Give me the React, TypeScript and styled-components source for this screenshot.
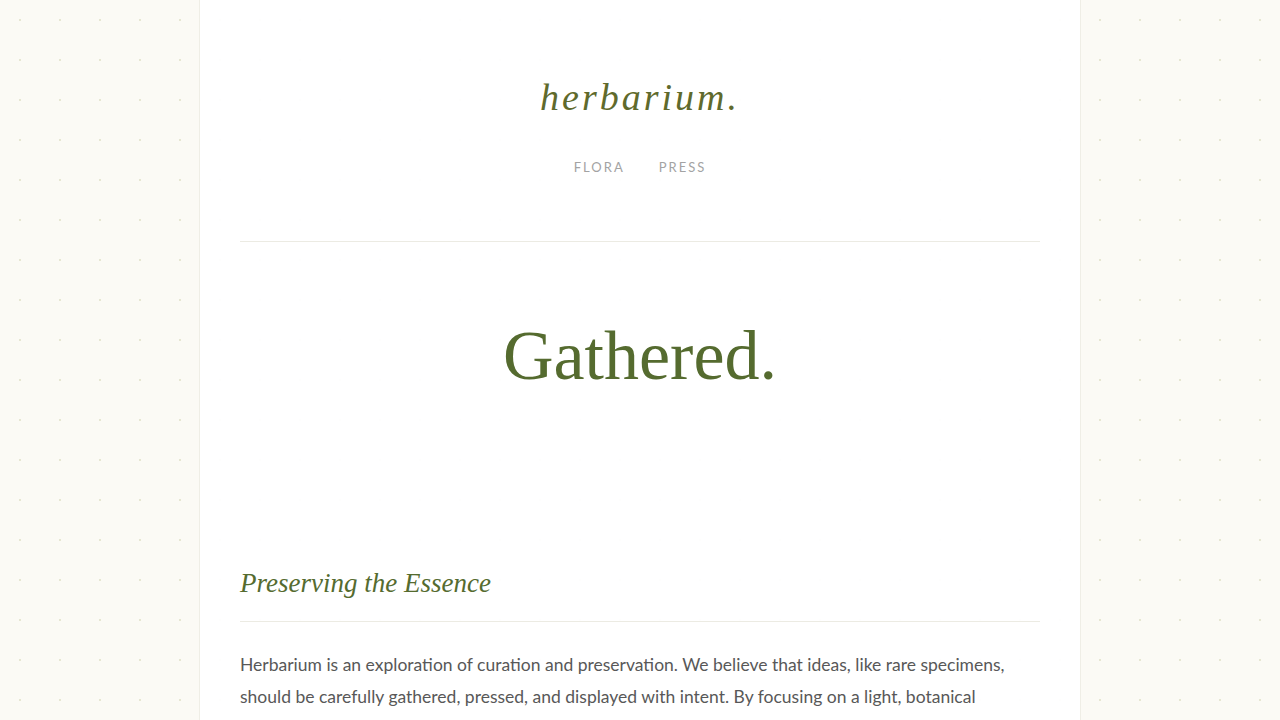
import React from 'react'
import styled, { createGlobalStyle } from 'styled-components'

const GlobalStyle = createGlobalStyle`
	html, body {
		margin: 0;
		padding: 0;
	}
	body {
		background-color: #fbfaf5;
		background-image: radial-gradient(circle at 20px 20px, #e6e6d2 1px, transparent 1.2px);
		background-size: 40px 40px;
		font-family: "Lato", "Liberation Sans", sans-serif;
		color: #555;
	}
`

const Page = styled.div`
	width: 800px;
	min-height: 100vh;
	margin: 0 auto;
	padding: 0 40px;
	background: rgba(255, 255, 255, 0.94);
	border-left: 1px solid #efeee6;
	border-right: 1px solid #efeee6;
`

const Header = styled.header`
	padding: 74px 0 64px;
	border-bottom: 1px solid #ecebe3;
	text-align: center;
`

const Logo = styled.div`
	font-family: "Liberation Serif", serif;
	font-style: italic;
	font-size: 38px;
	line-height: 46px;
	letter-spacing: 3px;
	color: #5f6a2c;
`

const Nav = styled.nav`
	margin-top: 37px;
	display: flex;
	justify-content: center;
	gap: 34px;
`

const NavLink = styled.a`
	font-size: 13px;
	line-height: 20px;
	letter-spacing: 2px;
	color: #a3a3a3;
	text-decoration: none;
	text-transform: uppercase;
`

const Hero = styled.section`
	padding: 74px 0 94px;
	text-align: center;
`

const Title = styled.h1`
	margin: 0;
	font-family: "Liberation Serif", serif;
	font-weight: 400;
	font-size: 70px;
	line-height: 80px;
	color: #556b2f;
`

const Section = styled.section`
	padding-top: 75px;
`

const SectionTitle = styled.h2`
	margin: 0;
	padding-bottom: 20px;
	border-bottom: 1px solid #ecebe3;
	font-family: "Liberation Serif", serif;
	font-style: italic;
	font-weight: 400;
	font-size: 27px;
	line-height: 36px;
	color: #556b2f;
`

const Text = styled.p`
	margin: 27px 0 0;
	font-size: 17.5px;
	line-height: 32px;
	color: #585858;
`

export default function App() {
	return (
		<>
			<GlobalStyle />
			<Page>
				<Header>
					<Logo>herbarium.</Logo>
					<Nav>
						<NavLink href="#">Flora</NavLink>
						<NavLink href="#">Press</NavLink>
					</Nav>
				</Header>
				<Hero>
					<Title>Gathered.</Title>
				</Hero>
				<Section>
					<SectionTitle>Preserving the Essence</SectionTitle>
					<Text>
						Herbarium is an exploration of curation and preservation. We believe that ideas, like rare specimens,
						should be carefully gathered, pressed, and displayed with intent. By focusing on a light, botanical
						aesthetic, we make room for each thought to breathe, to settle, and to be seen for what it is.
					</Text>
				</Section>
			</Page>
		</>
	)
}
